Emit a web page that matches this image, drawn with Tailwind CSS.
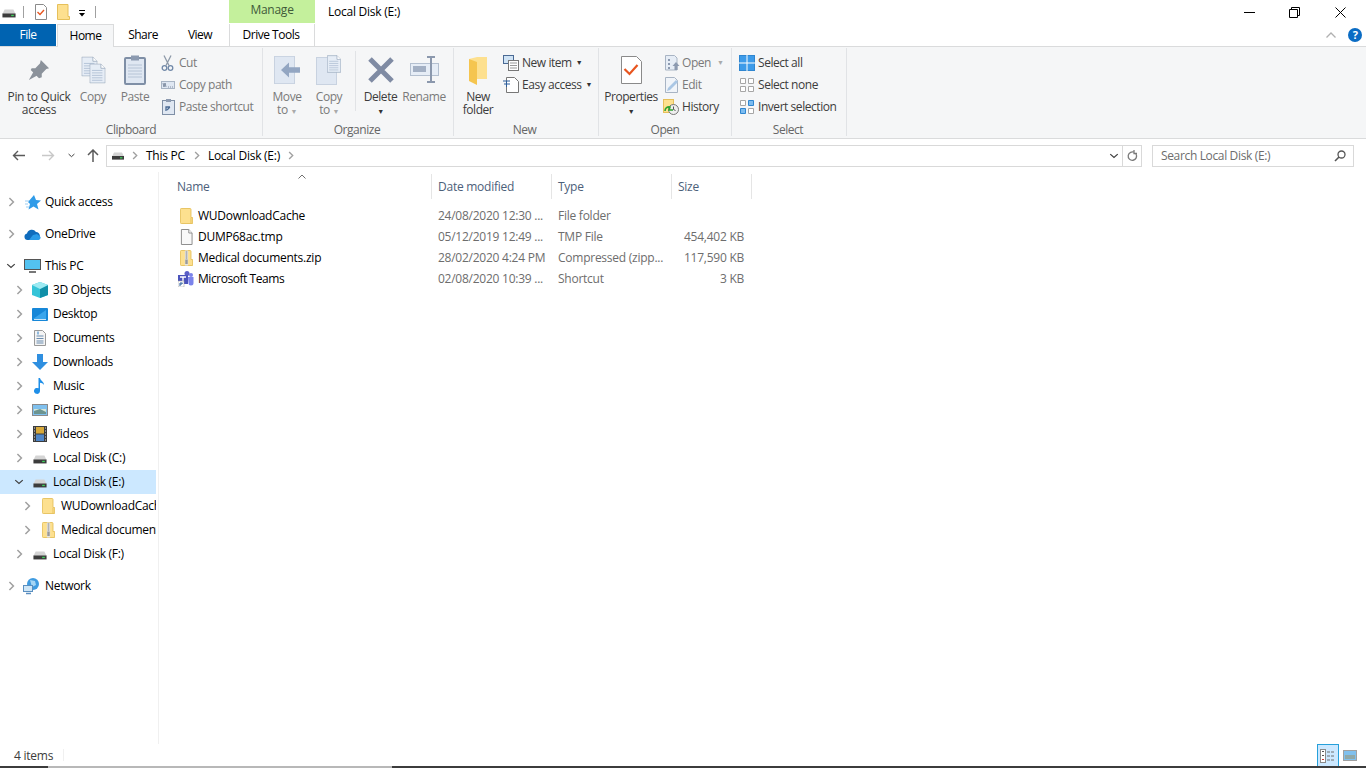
<!DOCTYPE html>
<html lang="en">

<head>
  <meta charset="UTF-8">
  <title>Local Disk (E:)</title>
  <script src="https://cdn.jsdelivr.net/npm/@tailwindcss/browser@4"></script>
</head>

<body class="w-[1366px] h-[768px] overflow-hidden bg-white font-['Open_Sans','Noto_Sans',sans-serif] text-[12px] tracking-[-0.25px] text-black">
  <svg class="hidden">
    <symbol id="drive" viewBox="0 0 16 10">
      <path d="M3 0.5h10l2.5 5h-15z" fill="#d4d4d4" />
      <rect x="0.5" y="5" width="15" height="4.5" fill="#3c3c3c" />
      <rect x="10.5" y="6.5" width="3" height="1.5" fill="#3ed25a" />
    </symbol>
    <symbol id="folder" viewBox="0 0 16 16" preserveAspectRatio="none">
      <path d="M1.5 0.5h11a1 1 0 0 1 1 1v8h2v6h-14a1 1 0 0 1-1-1v-13a1 1 0 0 1 1-1z" fill="#fde08f" stroke="#e6c05a" />
      <path d="M13.5 10v5.5" stroke="#e6c05a" />
    </symbol>
    <symbol id="zip" viewBox="0 0 16 16" preserveAspectRatio="none">
      <path d="M1.5 0.5h11a1 1 0 0 1 1 1v8h2v6h-14a1 1 0 0 1-1-1v-13a1 1 0 0 1 1-1z" fill="#fde08f" stroke="#e6c05a" />
      <rect x="6" y="0.5" width="4" height="15" fill="#e4e4e4" />
      <path d="M7 2h2M7 4h2M7 6h2M7 8h2" stroke="#777" />
      <rect x="6.5" y="9.5" width="3" height="4.5" fill="#999" />
    </symbol>
    <symbol id="chevr" viewBox="0 0 8 12">
      <path d="M1.5 1.2l4.800 4.800-4.800 4.800" fill="none" stroke="#a0a0a0" stroke-width="1.800" />
    </symbol>
    <symbol id="chevd" viewBox="0 0 12 8">
      <path d="M1 1.5l5 4.500 5-4.500" fill="none" stroke="#404040" stroke-width="1.700" />
    </symbol>
    <symbol id="page" viewBox="0 0 26 32">
      <path d="M0.5 0.5h18l7 7v24h-25z" fill="#e6edf6" stroke="#9aa9bd" stroke-width="1.300" />
      <path d="M18.5 0.5v7h7" fill="#fff" stroke="#9aa9bd" stroke-width="1.300" />
      <path d="M4 11h17M4 15h17M4 19h17M4 23h17M4 27h17" stroke="#a9bad0" stroke-width="1.300" />
    </symbol>
  </svg>

  <!-- title bar -->
  <div class="flex h-[24px] items-center relative">
    <svg class="ml-[2px] w-[14px] h-[9px] mt-[3px]"><use href="#drive" /></svg>
    <div class="ml-[7px] w-px h-[12px] bg-[#a0a0a0]"></div>
    <svg class="ml-[11px] w-[12px] h-[16px]" viewBox="0 0 12 16">
      <path d="M0.5 0.5h8l3 3v12h-11z" fill="#fff" stroke="#8a8a8a" />
      <path d="M2.5 8l2.5 2.5 4-4.500" fill="none" stroke="#e8551f" stroke-width="1.400" />
    </svg>
    <svg class="ml-[10px] w-[13px] h-[16px]" viewBox="0 0 13 16">
      <path d="M0.5 0.5h10.500v12h1.500v3h-12z" fill="#fde08f" stroke="#e6c05a" />
    </svg>
    <svg class="ml-[8px] w-[8px] h-[7px] mt-[2px]" viewBox="0 0 8 7">
      <path d="M1 0.5h6" stroke="#000" />
      <path d="M1 3h6l-3 3.500z" fill="#000" />
    </svg>
    <div class="ml-[9px] w-px h-[12px] bg-[#a0a0a0]"></div>
    <div class="ml-[133px] w-[86px] h-[23px] self-start bg-[#c4f09c] text-[#3f5a3a] flex items-center justify-center pb-[3px]">Manage</div>
    <div class="ml-[13px] pb-[1px]">Local Disk (E:)</div>
    <div class="ml-auto flex items-center">
      <svg class="w-[11px] h-[11px] mr-[34px]"><path d="M0 5.500h11" stroke="#000" /></svg>
      <svg class="w-[11px] h-[11px] mr-[35px]"><path d="M0.500 2.500h8v8h-8zM2.500 2.500v-2h8v8h-2" fill="none" stroke="#000" /></svg>
      <svg class="w-[11px] h-[11px] mr-[20px]"><path d="M0.500 0.500l10 10M10.500 0.500l-10 10" stroke="#000" /></svg>
    </div>
  </div>

  <!-- tabs -->
  <div class="flex h-[22px] relative tracking-[-0.5px]">
    <div class="w-[56px] bg-[#0063b1] text-white flex items-center justify-center">File</div>
    <div class="ml-px w-[57px] h-[23px] bg-[#f5f6f7] border border-b-0 border-[#dadbdc] flex items-center justify-center z-10 pb-[1px]">Home</div>
    <div class="w-[58px] flex items-center justify-center">Share</div>
    <div class="w-[56px] flex items-center justify-center">View</div>
    <div class="w-[86px] ml-px border-x border-[#dadbdc] flex items-center justify-center pr-[2px]">Drive Tools</div>
    <div class="ml-auto flex items-center">
      <svg class="w-[10px] h-[6px] mr-[12px]" viewBox="0 0 10 6"><path d="M0.500 5.500l4.500-4.500 4.500 4.500" fill="none" stroke="#b0b0b0" stroke-width="1.300" /></svg>
      <div class="w-[14px] h-[14px] mr-[4px] rounded-full bg-[#0a6cc4] text-white text-[11px] font-bold flex items-center justify-center">?</div>
    </div>
  </div>

  <!-- ribbon -->
  <div class="flex h-[93px] bg-[#f5f6f7] border-y border-[#dadbdc] text-[#7a7a7a] tracking-[-0.45px]">

    <div class="w-[263px] h-[88px] mt-[1px] border-r border-[#e1e3e6] flex flex-col">
      <div class="flex flex-1">
        <div class="w-[66px] ml-[6px] flex flex-col items-center leading-[13px] text-[#3c3c3c] tracking-[-0.35px]">
          <div class="h-[41px] mt-px flex items-center">
            <svg class="w-[22px] h-[22px]" viewBox="0 0 24 24">
              <path d="M14 1l9 9-3 1-5 5 0 4-3 1-9-9 1-2 4 0 5-5z" fill="#8b929b" />
              <path d="M6 14l-5 9 9-5z" fill="#8b929b" />
            </svg>
          </div>
          <div class="text-center">Pin to Quick<br>access</div>
        </div>
        <div class="w-[42px] flex flex-col items-center leading-[13px]">
          <div class="h-[41px] mt-px flex items-center">
            <svg class="w-[25px] h-[28px]" viewBox="0 0 25 28">
              <use href="#page" width="16" height="20" x="0.500" y="0.500" />
              <use href="#page" width="16" height="20" x="8.500" y="7.500" />
            </svg>
          </div>
          <div>Copy</div>
        </div>
        <div class="w-[42px] flex flex-col items-center leading-[13px]">
          <div class="h-[41px] mt-px flex items-center">
            <svg class="w-[22px] h-[30px]" viewBox="0 0 22 30">
              <rect x="1" y="3" width="20" height="26" rx="1" fill="#dfe7f2" stroke="#7f8fa6" stroke-width="2" />
              <rect x="7" y="0.500" width="8" height="5" fill="#8c9ab0" />
              <path d="M4 10h14M4 13h14M4 16h14M4 19h14M4 22h14" stroke="#b6c4d6" />
            </svg>
          </div>
          <div>Paste</div>
        </div>
        <div class="ml-[5px] mt-[4px] flex flex-col">
          <div class="h-[22px] flex items-center">
            <svg class="w-[13px] h-[16px] mr-[5px]" viewBox="0 0 13 16">
              <path d="M3 0.500l5 10M10 0.500l-5 10" stroke="#8d99a8" stroke-width="1.300" />
              <circle cx="3.500" cy="13" r="2.300" fill="none" stroke="#7189a8" stroke-width="1.300" />
              <circle cx="9.500" cy="13" r="2.300" fill="none" stroke="#7189a8" stroke-width="1.300" />
            </svg>
            Cut
          </div>
          <div class="h-[22px] flex items-center">
            <svg class="w-[14px] h-[8px] mr-[4px]" viewBox="0 0 14 8">
              <rect x="0.500" y="0.500" width="13" height="7" fill="#dfe7f2" stroke="#a8b4c4" />
              <path d="M2 2l1 4 1-4 1 4M7 6h1M9 6h1M11 6h1" stroke="#6b7a90" stroke-width="0.800" fill="none" />
            </svg>
            Copy path
          </div>
          <div class="h-[22px] flex items-center">
            <svg class="w-[13px] h-[16px] ml-[1px] mr-[4px]" viewBox="0 0 13 16">
              <rect x="0.500" y="1.500" width="12" height="14" fill="#dfe7f2" stroke="#7f8fa6" />
              <rect x="4" y="0" width="5" height="3" fill="#8c9ab0" />
              <path d="M4 12v-4h4M8 8l-3 3" stroke="#4a6a94" fill="none" stroke-width="1.300" />
            </svg>
            Paste shortcut
          </div>
        </div>
      </div>
      <div class="h-[12px] leading-[12px] text-center text-[#666]">Clipboard</div>
    </div>

    <div class="w-[191px] h-[88px] mt-[1px] border-r border-[#e1e3e6] flex flex-col">
      <div class="flex flex-1">
        <div class="w-[42px] ml-[3px] flex flex-col items-center leading-[13px]">
          <div class="h-[41px] mt-px flex items-center">
            <svg class="w-[26px] h-[28px]" viewBox="0 0 26 30" preserveAspectRatio="none">
              <rect x="0.500" y="0.500" width="20" height="29" fill="#dfe7f2" stroke="#c8d2e0" />
              <path d="M26 12h-11v-5l-8 8 8 8v-5h11z" fill="#93a6c2" />
            </svg>
          </div>
          <div class="text-center">Move<br>to <span class="text-[7px] text-[#aaa]">▼</span></div>
        </div>
        <div class="w-[42px] flex flex-col items-center leading-[13px]">
          <div class="h-[41px] mt-px flex items-center">
            <svg class="w-[26px] h-[30px]" viewBox="0 0 26 30">
              <rect x="0.500" y="2.500" width="20" height="27" fill="#dfe7f2" stroke="#c8d2e0" />
              <use href="#page" width="14" height="18" x="11" y="0" />
            </svg>
          </div>
          <div class="text-center">Copy<br>to <span class="text-[7px] text-[#aaa]">▼</span></div>
        </div>
        <div class="w-px h-[60px] mt-[3px] ml-[5px] bg-[#e1e3e6]"></div>
        <div class="w-[49px] flex flex-col items-center leading-[13px] text-[#3c3c3c]">
          <div class="h-[41px] mt-px flex items-center">
            <svg class="w-[26px] h-[26px]" viewBox="0 0 26 26">
              <path d="M2 2l22 22M24 2l-22 22" stroke="#7f8ba3" stroke-width="5" />
            </svg>
          </div>
          <div class="text-center">Delete<br><span class="text-[7px] text-[#333]">▼</span></div>
        </div>
        <div class="w-[38px] flex flex-col items-center leading-[13px]">
          <div class="h-[41px] mt-px flex items-center">
            <svg class="w-[29px] h-[27px]" viewBox="0 0 29 27">
              <rect x="0.500" y="7.500" width="28" height="12" fill="#e6edf6" stroke="#b4c0d0" />
              <rect x="3" y="10" width="13" height="6" fill="#a3b0c4" />
              <path d="M17 1h8M21 1v25M17 26h8" stroke="#8b98ad" stroke-width="2" fill="none" />
            </svg>
          </div>
          <div>Rename</div>
        </div>
      </div>
      <div class="h-[12px] leading-[12px] text-center text-[#666] pr-[2px]">Organize</div>
    </div>

    <div class="w-[145px] h-[88px] mt-[1px] border-r border-[#e1e3e6] flex flex-col">
      <div class="flex flex-1">
        <div class="w-[48px] flex flex-col items-center leading-[13px] text-[#3c3c3c]">
          <div class="h-[41px] mt-px flex items-center">
            <svg class="w-[19px] h-[28px] mt-[2px]" viewBox="0 0 19 28">
              <path d="M0 2l8 -2h10v22h-10z" fill="#fde08f" />
              <path d="M0 2l8 3v23l-8-4z" fill="#f5c54f" />
            </svg>
          </div>
          <div class="text-center">New<br>folder</div>
        </div>
        <div class="mt-[4px] flex flex-col text-[#3c3c3c]">
          <div class="h-[22px] flex items-center">
            <svg class="w-[16px] h-[16px] mr-[3px] ml-px" viewBox="0 0 16 16">
              <rect x="0.500" y="0.500" width="10" height="8" fill="#cfe3f5" stroke="#4a6a94" />
              <rect x="5.500" y="5.500" width="10" height="10" fill="#fff" stroke="#777" />
              <path d="M7 8h7M7 10.500h7M7 13h7" stroke="#999" />
            </svg>
            New item <span class="ml-[4px] text-[7px] text-[#333]">▼</span>
          </div>
          <div class="h-[22px] flex items-center">
            <svg class="w-[16px] h-[16px] mr-[3px] ml-px" viewBox="0 0 16 16">
              <path d="M3.500 0.500h8l4 4v11h-12z" fill="#fff" stroke="#777" />
              <path d="M0 4h7M1 7h6M3.500 4v6" stroke="#2a5c9a" fill="none" />
            </svg>
            Easy access <span class="ml-[4px] text-[7px] text-[#333]">▼</span>
          </div>
        </div>
      </div>
      <div class="h-[12px] leading-[12px] text-center text-[#666] pr-[3px]">New</div>
    </div>

    <div class="w-[133px] h-[88px] mt-[1px] border-r border-[#e1e3e6] flex flex-col">
      <div class="flex flex-1">
        <div class="w-[64px] flex flex-col items-center leading-[13px] text-[#3c3c3c]">
          <div class="h-[41px] mt-px flex items-center">
            <svg class="w-[21px] h-[28px]" viewBox="0 0 21 28">
              <path d="M0.500 0.500h15l5 5v22h-20z" fill="#fff" stroke="#8a8a8a" />
              <path d="M3.500 13l5 5 8-9" fill="none" stroke="#e8551f" stroke-width="2.200" />
            </svg>
          </div>
          <div class="text-center">Properties<br><span class="text-[7px] text-[#333]">▼</span></div>
        </div>
        <div class="mt-[4px] flex flex-col">
          <div class="h-[22px] flex items-center">
            <svg class="w-[15px] h-[16px] ml-[2px] mr-[2px]" viewBox="0 0 15 16">
              <path d="M0.500 0.500h9l2.500 2.500v12h-11.500z" fill="#e6edf6" stroke="#a8b4c4" />
              <path d="M3 4h2v2h-2zM3 8h2v2h-2zM3 12h2v2h-2z" fill="#8c9ab0" />
              <path d="M11 7l3.500 4h-2v4h-3v-4h-2z" fill="#8c9ab0" />
            </svg>
            Open <span class="ml-[6px] text-[7px] text-[#aaa]">▼</span>
          </div>
          <div class="h-[22px] flex items-center">
            <svg class="w-[15px] h-[16px] ml-[2px] mr-[2px]" viewBox="0 0 15 16">
              <path d="M0.500 0.500h9l3 3v12h-12z" fill="#f0f4f9" stroke="#a8b4c4" />
              <path d="M2 14l1-3 8-8 2 2-8 8z" fill="#a9c6e4" />
            </svg>
            Edit
          </div>
          <div class="h-[22px] flex items-center text-[#3c3c3c]">
            <svg class="w-[16px] h-[16px] mr-[3px]" viewBox="0 0 16 16">
              <rect x="0.500" y="0.500" width="10" height="13" fill="#fde08f" stroke="#e6c05a" />
              <circle cx="10.500" cy="10.500" r="5" fill="#eee" stroke="#777" />
              <path d="M10.500 7.500v3l2 1" stroke="#555" fill="none" />
              <path d="M2 12a4 4 0 0 1 5-4l-1 3h4" fill="none" stroke="#2fa52f" stroke-width="1.600" />
            </svg>
            History
          </div>
        </div>
      </div>
      <div class="h-[12px] leading-[12px] text-center text-[#666]">Open</div>
    </div>

    <div class="w-[115px] h-[88px] mt-[1px] border-r border-[#e1e3e6] flex flex-col">
      <div class="flex flex-1 flex-col mt-[4px] pl-[7px] text-[#3c3c3c]">
        <div class="h-[22px] flex items-center">
          <svg class="w-[16px] h-[16px] mr-[3px]" viewBox="0 0 16 16">
            <rect x="0.500" y="0.500" width="15" height="15" fill="#3d9be9" stroke="#2f86d0" />
            <path d="M8 0v16M0 8h16" stroke="#fff" />
          </svg>
          Select all
        </div>
        <div class="h-[22px] flex items-center">
          <svg class="w-[16px] h-[16px] mr-[3px]" viewBox="0 0 16 16">
            <path d="M1.500 1.500h5v5h-5zM9.500 1.500h5v5h-5zM1.500 9.500h5v5h-5zM9.500 9.500h5v5h-5z" fill="#fff" stroke="#a6a6a6" />
          </svg>
          Select none
        </div>
        <div class="h-[22px] flex items-center">
          <svg class="w-[16px] h-[16px] mr-[3px]" viewBox="0 0 16 16">
            <path d="M1.500 1.500h5v5h-5zM9.500 9.500h5v5h-5z" fill="#fff" stroke="#a6a6a6" />
            <path d="M9.500 1.500h5v5h-5zM1.500 9.500h5v5h-5z" fill="#7cbcf0" stroke="#2f86d0" />
          </svg>
          Invert selection
        </div>
      </div>
      <div class="h-[12px] leading-[12px] text-center text-[#666] pr-[2px]">Select</div>
    </div>
  </div>

  <!-- address bar -->
  <div class="flex h-[33px] items-center">
    <svg class="ml-[12px] w-[13px] h-[11px]" viewBox="0 0 13 11"><path d="M13 5.500h-11M6 1l-4.500 4.500 4.500 4.500" fill="none" stroke="#5a5a5a" stroke-width="1.400" /></svg>
    <svg class="ml-[17px] w-[13px] h-[11px]" viewBox="0 0 13 11"><path d="M0 5.500h11M7 1l4.500 4.500-4.500 4.500" fill="none" stroke="#c8c8c8" stroke-width="1.400" /></svg>
    <svg class="ml-[13px] w-[7px] h-[5px]"><use href="#chevd" /></svg>
    <svg class="ml-[12px] w-[12px] h-[13px]" viewBox="0 0 12 13"><path d="M6 13v-11.500M1 6l5-5 5 5" fill="none" stroke="#5a5a5a" stroke-width="1.500" /></svg>
    <div class="ml-[7px] w-[1036px] h-[22px] border border-[#d9d9d9] flex items-center">
      <svg class="ml-[4px] w-[14px] h-[8px]"><use href="#drive" /></svg>
      <svg class="ml-[7px] w-[6px] h-[9px]"><use href="#chevr" /></svg>
      <span class="ml-[8px]">This PC</span>
      <svg class="ml-[9px] w-[6px] h-[9px]"><use href="#chevr" /></svg>
      <span class="ml-[8px]">Local Disk (E:)</span>
      <svg class="ml-[8px] w-[6px] h-[9px]"><use href="#chevr" /></svg>
      <svg class="ml-auto w-[10px] h-[6px]"><use href="#chevd" /></svg>
      <div class="ml-[3px] w-px h-full bg-[#d9d9d9]"></div>
      <svg class="ml-[4px] mr-[3px] w-[11px] h-[12px]" viewBox="0 0 11 12"><path d="M9 4a4.200 4.200 0 1 1-1.500-1.500M7 0v3.500h3" fill="none" stroke="#7a7a7a" stroke-width="1.300" /></svg>
    </div>
    <div class="ml-[10px] w-[202px] h-[22px] border border-[#d9d9d9] flex items-center text-[#6d6d6d] pl-[8px] tracking-[-0.35px]">
      Search Local Disk (E:)
      <svg class="ml-auto mr-[7px] w-[12px] h-[12px]" viewBox="0 0 12 12"><circle cx="7.500" cy="4.500" r="3.500" fill="none" stroke="#555" stroke-width="1.300" /><path d="M5 7l-4 4" stroke="#555" stroke-width="1.600" /></svg>
    </div>
  </div>

  <!-- main -->
  <div class="flex h-[572px]">
    <div class="w-[159px] h-full border-r border-[#f0f0f0] pt-[18px] overflow-hidden whitespace-nowrap tracking-[-0.3px]">
      <div class="h-[24px] flex items-center pl-[8px]">
        <svg class="w-[7px] h-[10px]"><use href="#chevr" /></svg>
        <svg class="ml-[10px] w-[16px] h-[15px]" viewBox="0 0 16 15"><path d="M9 0l2 5 5 .5-4 3.500 1.500 5.500-5-3-5 3 1.500-5.500-2-2z" fill="#2f9be8" /><path d="M0 6h4M0 9h3M1 12h3" stroke="#9bcdf2" /></svg>
        <span class="ml-[4px]">Quick access</span>
      </div>
      <div class="h-[8px]"></div>
      <div class="h-[24px] flex items-center pl-[8px]">
        <svg class="w-[7px] h-[10px]"><use href="#chevr" /></svg>
        <svg class="ml-[9px] w-[17px] h-[11px]" viewBox="0 0 17 11"><path d="M3.500 11a3.300 3.300 0 0 1-.500-6.500 5 5 0 0 1 9-1.500 4.200 4.200 0 0 1 1.500 8z" fill="#0f6cbd" /><path d="M5 11l4-5 4-1 3.500 3a2.500 2.500 0 0 1-2 3z" fill="#2a9be8" /></svg>
        <span class="ml-[4px]">OneDrive</span>
      </div>
      <div class="h-[8px]"></div>
      <div class="h-[24px] flex items-center pl-[6px]">
        <svg class="w-[10px] h-[6px]"><use href="#chevd" /></svg>
        <svg class="ml-[8px] w-[17px] h-[15px]" viewBox="0 0 17 15"><rect x="0.500" y="0.500" width="16" height="10" fill="#53c2f0" stroke="#555" /><path d="M5 13h7" stroke="#777" stroke-width="2" /></svg>
        <span class="ml-[4px]">This PC</span>
      </div>
      <div class="h-[24px] flex items-center pl-[16px]">
        <svg class="w-[7px] h-[10px]"><use href="#chevr" /></svg>
        <svg class="ml-[9px] w-[16px] h-[16px]" viewBox="0 0 16 16"><path d="M8 0l8 3v10l-8 3-8-3v-10z" fill="#35c4d8" /><path d="M8 7l8-4v10l-8 3z" fill="#0f8fa8" /><path d="M8 0l8 3-8 4-8-4z" fill="#9deaf2" /></svg>
        <span class="ml-[5px]">3D Objects</span>
      </div>
      <div class="h-[24px] flex items-center pl-[16px]">
        <svg class="w-[7px] h-[10px]"><use href="#chevr" /></svg>
        <svg class="ml-[9px] w-[16px] h-[13px]" viewBox="0 0 16 13"><rect width="16" height="13" rx="1" fill="#1787d8" /><path d="M1 11l13-9v9z" fill="#3aa5ec" /><path d="M2 11.500h12" stroke="#cce6f8" /></svg>
        <span class="ml-[5px]">Desktop</span>
      </div>
      <div class="h-[24px] flex items-center pl-[16px]">
        <svg class="w-[7px] h-[10px]"><use href="#chevr" /></svg>
        <svg class="ml-[11px] w-[12px] h-[16px]" viewBox="0 0 12 16"><path d="M0.500 0.500h8l3 3v12h-11z" fill="#f4f4f4" stroke="#999" /><path d="M2.500 6h7M2.500 8.500h7M2.500 11h7M2.500 13h7" stroke="#6b8db0" /><path d="M4 1.500v3" stroke="#2a7fc8" /></svg>
        <span class="ml-[7px]">Documents</span>
      </div>
      <div class="h-[24px] flex items-center pl-[16px]">
        <svg class="w-[7px] h-[10px]"><use href="#chevr" /></svg>
        <svg class="ml-[9px] w-[16px] h-[16px]" viewBox="0 0 16 16"><path d="M5 0h6v8h5l-8 8-8-8h5z" fill="#2f8fe0" /></svg>
        <span class="ml-[5px]">Downloads</span>
      </div>
      <div class="h-[24px] flex items-center pl-[16px]">
        <svg class="w-[7px] h-[10px]"><use href="#chevr" /></svg>
        <svg class="ml-[11px] w-[11px] h-[16px]" viewBox="0 0 11 16"><path d="M4.500 0h1.500c.5 3 4 3.500 4 7-1-1.500-2.500-2-4-2.200v8a3 3 0 1 1-1.500-2.500z" fill="#1f8fe8" /></svg>
        <span class="ml-[8px]">Music</span>
      </div>
      <div class="h-[24px] flex items-center pl-[16px]">
        <svg class="w-[7px] h-[10px]"><use href="#chevr" /></svg>
        <svg class="ml-[9px] w-[16px] h-[12px]" viewBox="0 0 16 12"><rect x="0.500" y="0.500" width="15" height="11" fill="#7fc0ee" stroke="#8a8a8a" /><path d="M2 5h12v5h-12z" fill="#d5e6d8" /><path d="M2 7l6-2 6 3v2h-12z" fill="#6d9490" /></svg>
        <span class="ml-[5px]">Pictures</span>
      </div>
      <div class="h-[24px] flex items-center pl-[16px]">
        <svg class="w-[7px] h-[10px]"><use href="#chevr" /></svg>
        <svg class="ml-[10px] w-[14px] h-[16px]" viewBox="0 0 14 16"><rect width="14" height="16" fill="#3c3c3c" /><rect x="3" y="1" width="8" height="6.500" fill="#d8a93a" /><rect x="3" y="8.500" width="8" height="6.500" fill="#4f86c8" /><path d="M1 2h1M1 5h1M1 8h1M1 11h1M1 14h1M12 2h1M12 5h1M12 8h1M12 11h1M12 14h1" stroke="#ddd" /></svg>
        <span class="ml-[6px]">Videos</span>
      </div>
      <div class="h-[24px] flex items-center pl-[16px]">
        <svg class="w-[7px] h-[10px]"><use href="#chevr" /></svg>
        <svg class="ml-[10px] w-[14px] h-[9px] mt-[3px]"><use href="#drive" /></svg>
        <span class="ml-[6px]">Local Disk (C:)</span>
      </div>
      <div class="h-[24px] w-[156px] bg-[#cce8ff] flex items-center pl-[14px]">
        <svg class="w-[10px] h-[6px]"><use href="#chevd" /></svg>
        <svg class="ml-[9px] w-[14px] h-[9px] mt-[3px]"><use href="#drive" /></svg>
        <span class="ml-[6px]">Local Disk (E:)</span>
      </div>
      <div class="h-[24px] w-[156px] overflow-hidden flex items-center pl-[24px]">
        <svg class="w-[7px] h-[10px] shrink-0"><use href="#chevr" /></svg>
        <svg class="ml-[11px] w-[13px] h-[16px] shrink-0"><use href="#folder" /></svg>
        <span class="ml-[6px]">WUDownloadCache</span>
      </div>
      <div class="h-[24px] w-[156px] overflow-hidden flex items-center pl-[24px]">
        <svg class="w-[7px] h-[10px] shrink-0"><use href="#chevr" /></svg>
        <svg class="ml-[11px] w-[13px] h-[16px] shrink-0"><use href="#zip" /></svg>
        <span class="ml-[6px]">Medical documents.zip</span>
      </div>
      <div class="h-[24px] flex items-center pl-[16px]">
        <svg class="w-[7px] h-[10px]"><use href="#chevr" /></svg>
        <svg class="ml-[10px] w-[14px] h-[9px] mt-[3px]"><use href="#drive" /></svg>
        <span class="ml-[6px]">Local Disk (F:)</span>
      </div>
      <div class="h-[8px]"></div>
      <div class="h-[24px] flex items-center pl-[8px]">
        <svg class="w-[7px] h-[10px]"><use href="#chevr" /></svg>
        <svg class="ml-[8px] w-[17px] h-[17px]" viewBox="0 0 17 17"><circle cx="10" cy="6" r="6" fill="#3f9be0" /><path d="M7 2l5 1 1 4-4 2z" fill="#a5d6f5" /><rect x="0.500" y="7.500" width="9" height="6" fill="#cfe6f6" stroke="#5a8fc0" /><path d="M3 15.500h5" stroke="#5a8fc0" stroke-width="1.500" /></svg>
        <span class="ml-[5px]">Network</span>
      </div>
    </div>

    <div class="flex-1 relative">
      <div class="absolute left-[139px] top-[2px] text-[#6d6d6d]">
        <svg class="w-[8px] h-[5px]" viewBox="0 0 8 5"><path d="M0.500 4.500l3.500-3.500 3.500 3.500" fill="none" stroke="#707070" /></svg>
      </div>
      <!-- header -->
      <div class="flex h-[25px] mt-[2px] items-center text-[#4c607a]">
        <div class="w-[273px] h-full pl-[18px] flex items-center border-r border-[#e5e5e5]">Name</div>
        <div class="w-[120px] h-full pl-[6px] flex items-center border-r border-[#e5e5e5]">Date modified</div>
        <div class="w-[120px] h-full pl-[6px] flex items-center border-r border-[#e5e5e5]">Type</div>
        <div class="w-[80px] h-full pl-[6px] flex items-center border-r border-[#e5e5e5]">Size</div>
      </div>
      <!-- rows -->
      <div class="mt-[6px]">
        <div class="flex h-[21px] items-center text-[#6d6d6d]">
          <div class="w-[273px] pl-[21px] flex items-center text-black"><svg class="w-[13px] h-[16px] mr-[5px]"><use href="#folder" /></svg>WUDownloadCache</div>
          <div class="w-[120px] pl-[6px]">24/08/2020 12:30 ...</div>
          <div class="w-[120px] pl-[6px]">File folder</div>
          <div class="w-[72px] text-right"></div>
        </div>
        <div class="flex h-[21px] items-center text-[#6d6d6d]">
          <div class="w-[273px] pl-[21px] flex items-center text-black"><svg class="w-[13px] h-[16px] mr-[5px]" viewBox="0 0 14 16" preserveAspectRatio="none"><path d="M1.500 0.500h8l3.500 3.500v11.500h-11.500z" fill="#f8f8f8" stroke="#8a8a8a" /><path d="M9.500 0.500v3.500h3.500" fill="#fff" stroke="#8a8a8a" /></svg>DUMP68ac.tmp</div>
          <div class="w-[120px] pl-[6px]">05/12/2019 12:49 ...</div>
          <div class="w-[120px] pl-[6px]">TMP File</div>
          <div class="w-[72px] text-right">454,402 KB</div>
        </div>
        <div class="flex h-[21px] items-center text-[#6d6d6d]">
          <div class="w-[273px] pl-[21px] flex items-center text-black"><svg class="w-[13px] h-[16px] mr-[5px]"><use href="#zip" /></svg>Medical documents.zip</div>
          <div class="w-[120px] pl-[6px]">28/02/2020 4:24 PM</div>
          <div class="w-[120px] pl-[6px]">Compressed (zipp...</div>
          <div class="w-[72px] text-right">117,590 KB</div>
        </div>
        <div class="flex h-[21px] items-center text-[#6d6d6d]">
          <div class="w-[273px] pl-[19px] flex items-center text-black tracking-[-0.45px]">
            <svg class="w-[16px] h-[16px] mr-[4px]" viewBox="0 0 16 16">
              <circle cx="13" cy="4" r="2" fill="#7b83eb" /><circle cx="9" cy="2.500" r="2.500" fill="#5b5fc7" />
              <path d="M10 6h5.500v6a2.500 2.500 0 0 1-5 0z" fill="#7b83eb" />
              <rect x="0" y="4" width="10" height="9" fill="#4b53bc" />
              <path d="M2 6h6M5 6v6" stroke="#fff" stroke-width="1.400" />
              <rect x="0" y="10" width="6" height="6" fill="#fff" stroke="#9a9a9a" stroke-width="0.500" />
              <path d="M2 15v-3h2.500M4.500 12l-2 2" stroke="#2a5c9a" fill="none" />
            </svg>Microsoft Teams
          </div>
          <div class="w-[120px] pl-[6px]">02/08/2020 10:39 ...</div>
          <div class="w-[120px] pl-[6px]">Shortcut</div>
          <div class="w-[72px] text-right">3 KB</div>
        </div>
      </div>
    </div>
  </div>

  <!-- status bar -->
  <div class="flex h-[22px] items-center pl-[14px] text-[#3c3c3c]">
    <span class="pt-[2px]">4 items</span>
    <div class="ml-[10px] w-px h-[12px] bg-[#f0f0f0]"></div>
    <div class="ml-auto flex items-center">
      <div class="w-[22px] h-[22px] bg-[#cce8ff] border-x-[1px] border-t-[1px] border-[#26a0da] flex items-center justify-center">
        <svg class="w-[16px] h-[14px]" viewBox="0 0 16 14"><rect x="0.500" y="0.500" width="5" height="13" fill="#fff" stroke="#8a8a8a" /><path d="M7 3h3M11 3h3M7 7h3M11 7h3M7 11h3M11 11h3" stroke="#707070" /><path d="M2 2.500h2M2 6.500h2" stroke="#555" /><path d="M2 10.500h2" stroke="#c33" /></svg>
      </div>
      <svg class="ml-[4px] mr-[9px] w-[14px] h-[11px]" viewBox="0 0 14 11"><rect x="0.500" y="0.500" width="13" height="10" fill="#7fc0ee" stroke="#a0a0a0" /><path d="M2 5h10v4h-10z" fill="#8fa8a8" /></svg>
    </div>
  </div>
  <div class="flex h-[2px]">
    <div class="w-[48px] bg-[#3c3c3c]"></div>
    <div class="w-[344px] bg-[#b8b8b8]"></div>
    <div class="flex-1 bg-[#3c3c3c]"></div>
  </div>
</body>

</html>
